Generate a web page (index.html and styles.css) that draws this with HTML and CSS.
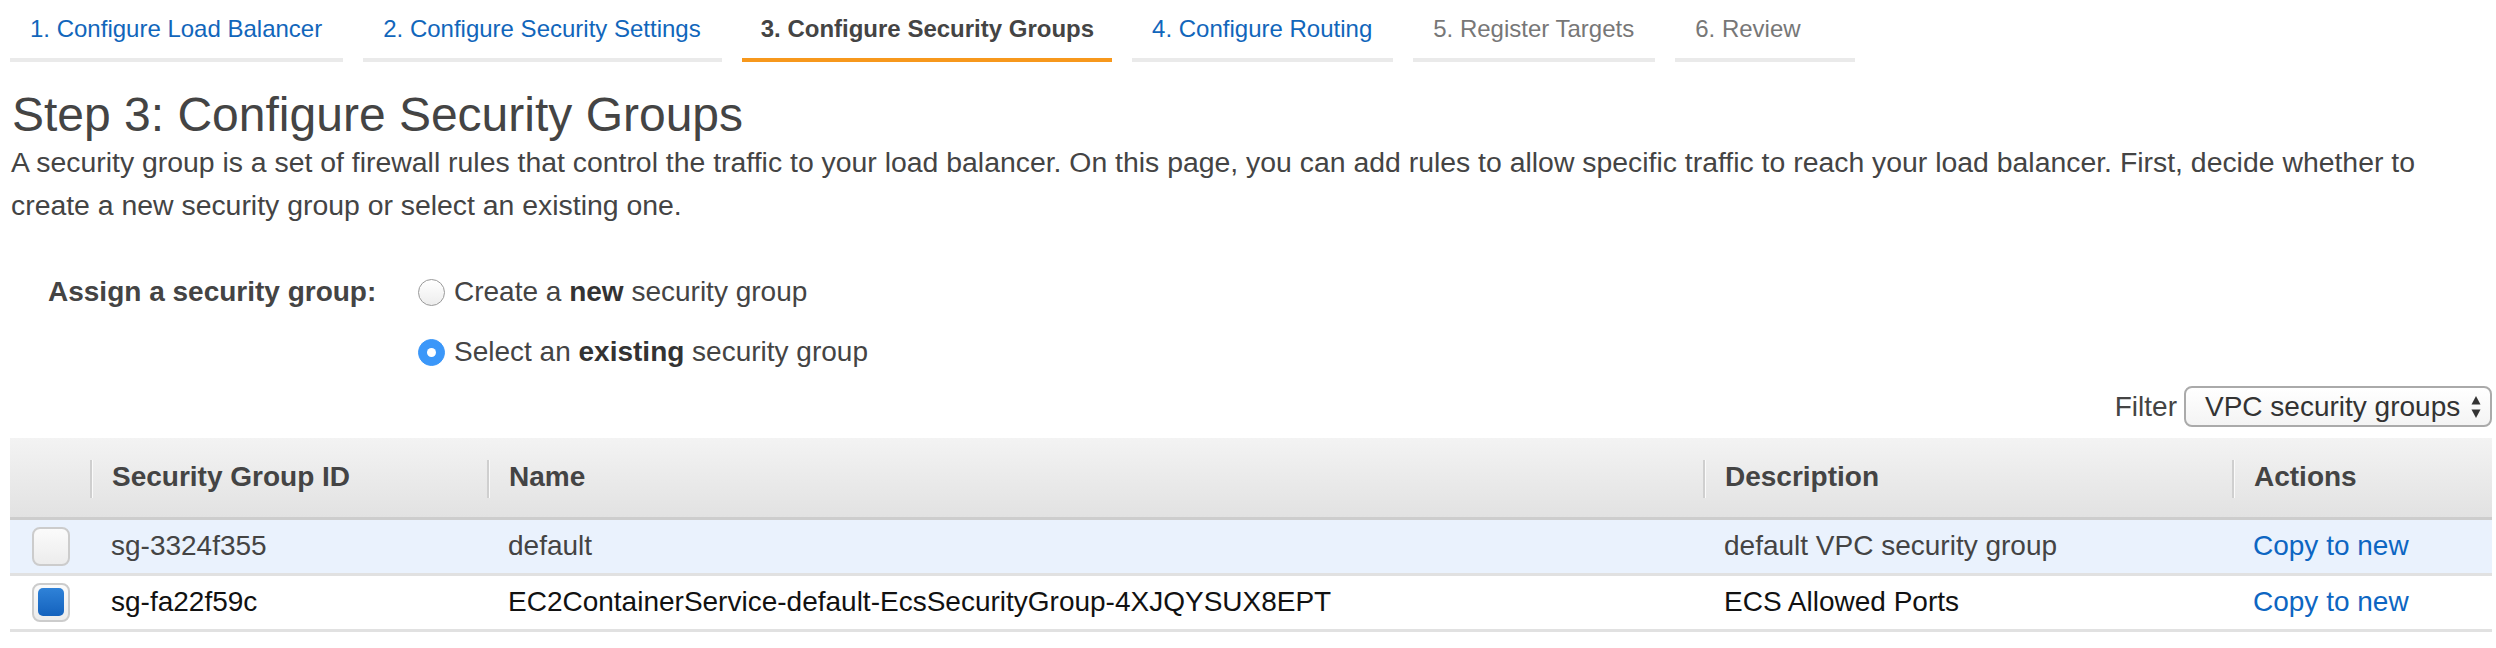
FILE: index.html
```html
<!DOCTYPE html>
<html lang="en">
<head>
<meta charset="utf-8">
<title>Step 3: Configure Security Groups</title>
<link rel="stylesheet" href="styles.css">
</head>
<body>
<div class="page">
  <nav class="tabs">
    <div class="tab link">1. Configure Load Balancer</div>
    <div class="tab link">2. Configure Security Settings</div>
    <div class="tab active">3. Configure Security Groups</div>
    <div class="tab link">4. Configure Routing</div>
    <div class="tab disabled">5. Register Targets</div>
    <div class="tab disabled last">6. Review</div>
  </nav>

  <h1 class="title">Step 3: Configure Security Groups</h1>
  <p class="desc">A security group is a set of firewall rules that control the traffic to your load balancer. On this page, you can add rules to allow specific traffic to reach your load balancer. First, decide whether to create a new security group or select an existing one.</p>

  <div class="assign">
    <div class="assign-label">Assign a security group:</div>
    <div class="options">
      <div class="option"><span class="radio"></span><span>Create a <b>new</b> security group</span></div>
      <div class="option"><span class="radio checked"><span class="dot"></span></span><span>Select an <b>existing</b> security group</span></div>
    </div>
  </div>

  <div class="filter-row">
    <span class="filter-label">Filter</span>
    <div class="select">
      <span class="select-text">VPC security groups</span>
      <svg class="arrows" width="10" height="24" viewBox="0 0 10 24"><path d="M5 1 L9.5 9.5 L0.5 9.5 Z" fill="#333"/><path d="M0.5 14.5 L9.5 14.5 L5 23 Z" fill="#333"/></svg>
    </div>
  </div>

  <table class="sg-table">
    <colgroup>
      <col class="c-check"><col class="c-id"><col class="c-name"><col class="c-desc"><col class="c-act">
    </colgroup>
    <thead>
      <tr>
        <th class="th-check"></th>
        <th>Security Group ID</th>
        <th>Name</th>
        <th>Description</th>
        <th>Actions</th>
      </tr>
    </thead>
    <tbody>
      <tr class="row hover">
        <td class="td-check"><span class="checkbox"></span></td>
        <td>sg-3324f355</td>
        <td>default</td>
        <td>default VPC security group</td>
        <td><span class="action">Copy to new</span></td>
      </tr>
      <tr class="row selected">
        <td class="td-check"><span class="checkbox checked"><span class="fill"></span></span></td>
        <td>sg-fa22f59c</td>
        <td>EC2ContainerService-default-EcsSecurityGroup-4XJQYSUX8EPT</td>
        <td>ECS Allowed Ports</td>
        <td><span class="action">Copy to new</span></td>
      </tr>
    </tbody>
  </table>
</div>
</body>
</html>
```

FILE: styles.css
```css
* { box-sizing: border-box; }
html, body { margin: 0; background: #fff; }
body {
  font-family: "Liberation Sans", Arial, Helvetica, sans-serif;
  color: #444;
}
.page { padding: 0 4px 0 10px; }

/* wizard tabs */
.tabs { display: flex; gap: 20px; }
.tab {
  padding: 14px 21px 15px 20px;
  font-size: 24px;
  line-height: 29px;
  white-space: nowrap;
  border-bottom: 4px solid #eaeaea;
}
.tab.link { color: #1166bb; }
.tab.active {
  padding-left: 19px;
  padding-right: 18px;
  color: #444;
  font-weight: bold;
  border-bottom-color: #f7981c;
}
.tab.disabled { color: #777; }
.tab.last { min-width: 180px; }

/* heading */
.title {
  margin: 27px 0 0 2px;
  font-size: 48px;
  line-height: 52px;
  font-weight: normal;
  color: #444;
}
.desc {
  margin: 0 0 0 1px;
  font-size: 28.4px;
  line-height: 43px;
  color: #444;
}

/* assign */
.assign {
  display: grid;
  grid-template-columns: 408px 1fr;
  margin-top: 35px;
  font-size: 28px;
}
.assign-label {
  padding-left: 38px;
  font-weight: bold;
  line-height: 60px;
  color: #444;
}
.option {
  display: flex;
  align-items: center;
  height: 60px;
  color: #444;
}
.option b { color: #333; }
.radio {
  width: 27px;
  height: 27px;
  border-radius: 50%;
  border: 1px solid #999;
  background: linear-gradient(#ffffff, #ededed);
  margin-right: 9px;
  flex: none;
  display: flex;
  align-items: center;
  justify-content: center;
}
.radio.checked { background: #3b97f9; border-color: #3b97f9; }
.radio .dot { width: 9px; height: 9px; border-radius: 50%; background: #fff; }

/* filter */
.filter-row {
  display: flex;
  justify-content: flex-end;
  align-items: center;
  gap: 7px;
  margin-top: 4px;
  font-size: 28px;
}
.filter-label { color: #444; }
.select {
  display: flex;
  align-items: center;
  justify-content: space-between;
  width: 308px;
  height: 41px;
  padding: 0 9px 0 19px;
  border: 2px solid #aaa;
  border-radius: 8px;
  background: linear-gradient(#ffffff, #f4f4f4);
  color: #333;
}

/* table */
.sg-table {
  width: 100%;
  margin-top: 11px;
  border-collapse: collapse;
  table-layout: fixed;
  font-size: 28px;
}
.c-check { width: 80px; }
.c-id { width: 397px; }
.c-name { width: 1216px; }
.c-desc { width: 529px; }
.c-act { width: 260px; }
.sg-table th {
  height: 80px;
  padding: 0 0 0 22px;
  text-align: left;
  font-weight: bold;
  color: #444;
  border-bottom: 3px solid #cdcdcd;
  background:
    linear-gradient(to right, #cfcfcf 0 2px, #fafafa 2px 3px) left 55% / 3px 38px no-repeat,
    linear-gradient(#f3f3f3, #e2e2e2);
}
.sg-table th.th-check { background: linear-gradient(#f3f3f3, #e2e2e2); }
.sg-table td {
  height: 56px;
  padding: 0 0 0 21px;
  border-bottom: 3px solid #e1e1e1;
  white-space: nowrap;
}
.row.hover td { background: #eaf2fd; color: #444; }
.row.selected td { background: #fff; color: #111; }
.sg-table td.td-check { padding: 0 0 0 22px; }
.checkbox {
  display: flex;
  align-items: center;
  justify-content: center;
  width: 38px;
  height: 39px;
  border: 2px solid #cccccc;
  border-radius: 8px;
  background: linear-gradient(#fbfbfb, #ececec);
}
.checkbox .fill {
  width: 26px;
  height: 28px;
  border-radius: 5px;
  background: linear-gradient(#2f82d8, #1462bd);
}
.action { color: #0d66c2; }
```
